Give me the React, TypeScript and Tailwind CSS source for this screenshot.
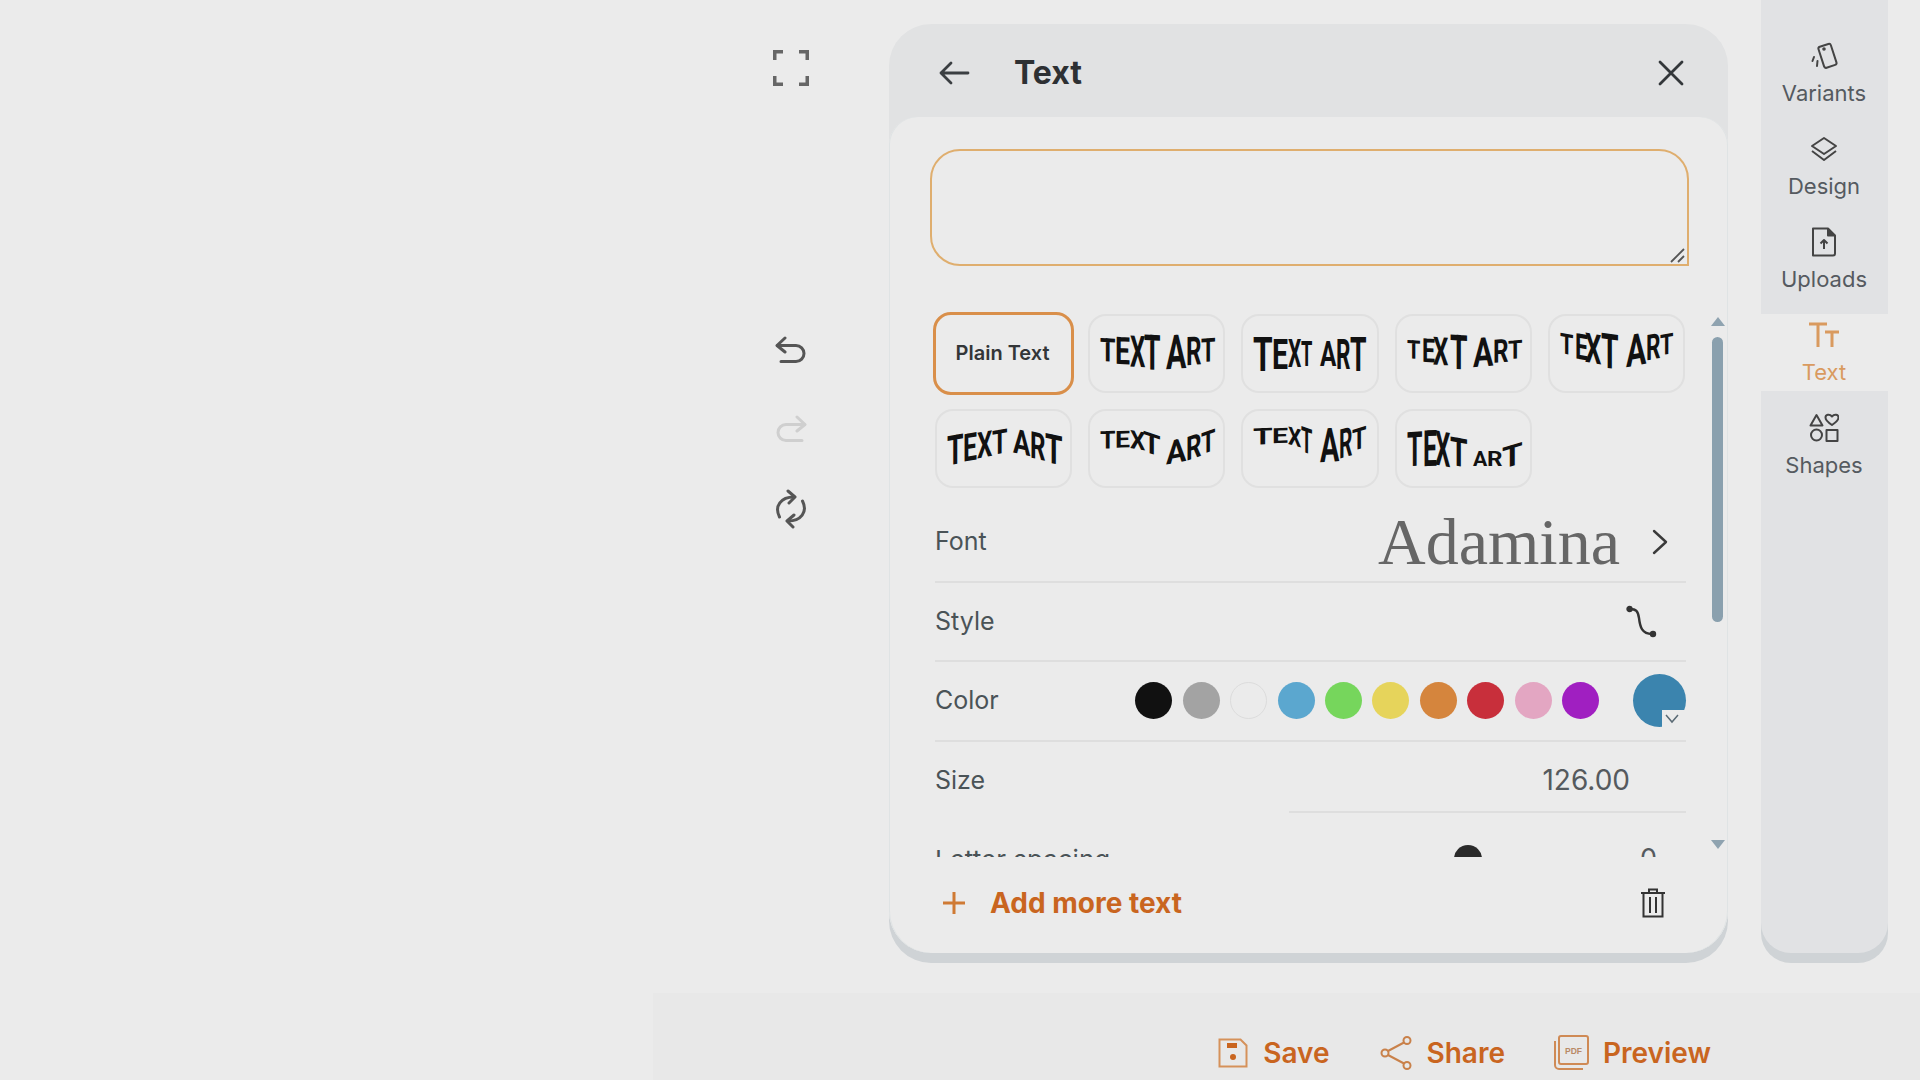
import React from "react";

type P = [number, number];
type Art = { top: P[]; bot: P[]; box: P[] };

const LETTERS = ["T", "E", "X", "T", "A", "R", "T"];
const GLYPH = [0.6, 0.56, 0.62, 0.6, 0.66, 0.62, 0.6];
const CAP = 71;

const at = (pts: P[], x: number) => {
  if (x <= pts[0][0]) return pts[0][1];
  for (let i = 1; i < pts.length; i++) {
    if (x <= pts[i][0]) {
      const [x0, y0] = pts[i - 1];
      const [x1, y1] = pts[i];
      return y0 + ((y1 - y0) * (x - x0)) / (x1 - x0);
    }
  }
  return pts[pts.length - 1][1];
};

const ARTS: Art[] = [
  { top: [[12, 25], [72, 20], [78, 20], [127, 25]], bot: [[12, 46], [72, 57], [78, 57], [127, 46]], box: [[12, 27], [27, 42], [42, 57], [56, 72], [78, 98], [98, 113], [113, 127]] },
  { top: [[12, 21], [71, 28], [79, 28], [125, 21]], bot: [[12, 58], [71, 51], [79, 51], [125, 58]], box: [[12, 31], [31, 47], [47, 60], [60, 71], [79, 95], [95, 109], [109, 125]] },
  { top: [[12, 27], [72, 20], [78, 23], [127, 27]], bot: [[12, 43], [72, 57], [78, 55], [127, 43]], box: [[12, 25], [27, 40], [38, 53], [55, 72], [78, 98], [98, 113], [113, 127]] },
  { top: [[12, 20], [125, 20]], bot: [[12, 38], [68, 57], [78, 55], [125, 38]], box: [[12, 25], [27, 40], [37, 53], [53, 70], [78, 98], [98, 112], [112, 125]] },
  { top: [[12, 27], [72, 20], [78, 20], [127, 27]], bot: [[12, 57], [72, 43], [78, 43], [127, 57]], box: [[12, 28], [28, 42], [42, 57], [57, 72], [78, 95], [95, 110], [110, 127]] },
  { top: [[12, 22], [55, 22], [72, 27], [80, 35], [98, 28], [127, 20]], bot: [[12, 40], [45, 38], [72, 48], [80, 57], [100, 52], [127, 40]], box: [[12, 27], [27, 42], [42, 57], [55, 72], [78, 98], [98, 113], [113, 127]] },
  { top: [[12, 19], [125, 19]], bot: [[12, 36], [50, 33], [71, 48], [85, 58], [105, 48], [125, 36]], box: [[12, 31], [31, 47], [47, 60], [60, 71], [79, 98], [98, 111], [111, 125]] },
  { top: [[12, 24], [40, 20], [72, 32], [78, 42], [107, 42], [127, 30]], bot: [[12, 57], [127, 57]], box: [[12, 27], [28, 42], [40, 55], [55, 72], [78, 92], [92, 107], [107, 127]] },
];

function TextArt({ art }: { art: Art }) {
  return (
    <svg width="137" height="79" viewBox="0 0 137 79" className="block">
      {LETTERS.map((ch, i) => {
        const [x0, x1] = art.box[i];
        const w = GLYPH[i] * 100;
        const tL = at(art.top, x0);
        const tR = at(art.top, x1);
        const bL = at(art.bot, x0);
        const bR = at(art.bot, x1);
        const a = (x1 - x0) / w;
        const b = ((tR + bR) / 2 - (tL + bL) / 2) / (x1 - x0) * a;
        const d = ((bL + bR) / 2 - (tL + tR) / 2) / CAP;
        const f = (bL + bR) / 2 - (b * w) / 2;
        return (
          <text
            key={i}
            transform={`matrix(${a} ${b} 0 ${d} ${x0} ${f})`}
            fontSize="100"
            fontWeight="700"
            fontFamily="Roboto, 'Liberation Sans', sans-serif"
            fill="#111"
          >
            {ch}
          </text>
        );
      })}
    </svg>
  );
}

function RailItem({ icon, label, active }: { icon: React.ReactNode; label: string; active?: boolean }) {
  return (
    <div
      className={
        active
          ? "flex h-[77px] flex-col items-center bg-[#ebebeb] text-[#d99a5f]"
          : "flex h-[77px] flex-col items-center text-[#555a60]"
      }
    >
      <div className="flex h-[42px] w-full items-center justify-center pr-[1px]">{icon}</div>
      <div className="mt-[2px] pr-[1px] text-[22px] leading-[28px]">{label}</div>
    </div>
  );
}

export default function App() {
  return (
    <div className="flex h-screen w-full flex-col overflow-hidden bg-[#ebebeb] font-['Inter',sans-serif]">
      <div className="flex h-[993px] shrink-0 items-start justify-end pr-[32px]">
        {/* tool column */}
        <div className="mr-[80px] flex w-[36px] flex-col items-center pt-[50px] text-[#5c5c5c]">
          <svg width="36" height="36" viewBox="0 0 36 36" fill="none" stroke="#666" strokeWidth="3.500">
            <path d="M1.750 10V1.750H10M26 1.750h8.250V10M1.750 26v8.250H10M26 34.250h8.250V26" />
          </svg>
          <svg className="mt-[250px]" width="32" height="27" viewBox="0 0 32 27" fill="none" stroke="#555" strokeWidth="3" strokeLinecap="round" strokeLinejoin="round">
            <path d="M10 2 2 9.500l8 6.500" />
            <path d="M2.500 9.500H21a8 8 0 0 1 0 16H6" />
          </svg>
          <svg className="mt-[52px]" width="32" height="28" viewBox="0 0 32 28" fill="none" stroke="#cfcfcf" strokeWidth="3" strokeLinecap="round" strokeLinejoin="round">
            <path d="M22 2l8 7.500-8 6.500" />
            <path d="M29.500 9.500H11a8 8 0 0 0 0 16h16" />
          </svg>
          <svg className="mt-[46px]" width="32" height="40" viewBox="0 0 32 40" fill="none" stroke="#555" strokeWidth="3" strokeLinecap="round" strokeLinejoin="round">
            <path d="M4.500 28C-1 17 6 8 19 8" />
            <path d="M13 2l7 6-6 6" />
            <path d="M27.500 12C33 23 26 32 13 32" />
            <path d="M19 26l-7 6 6 6" />
          </svg>
        </div>

        {/* panel */}
        <div className="mt-[24px] mr-[33px] flex h-[929px] w-[839px] flex-col rounded-[42px] bg-[#e1e2e3] shadow-[0_10px_0_#cfd3d6]">
          <div className="flex h-[93px] shrink-0 items-center pt-[5px] pr-[44px] pl-[50px]">
            <svg width="31" height="24" viewBox="0 0 31 24" fill="none" stroke="#3b3f42" strokeWidth="2.800" strokeLinecap="round" strokeLinejoin="round">
              <path d="M29 12H2M12 2 2 12l10 10" />
            </svg>
            <div className="ml-[44px] flex-1 text-[32px] font-bold leading-none text-[#2d3033]">Text</div>
            <svg width="26" height="26" viewBox="0 0 26 26" fill="none" stroke="#33373a" strokeWidth="2.800" strokeLinecap="round">
              <path d="M2 2l22 22M24 2 2 24" />
            </svg>
          </div>

          <div className="flex min-h-0 flex-1 flex-col rounded-t-[28px] rounded-b-[42px] bg-[#ebebeb] shadow-[inset_1px_0_0_#dfe3e4,inset_-1px_0_0_#dfe3e4]">
            <div className="px-[41px] pt-[32px]">
              <div className="relative h-[117px] w-[759px]">
                <textarea className="block h-full w-full resize-none rounded-[30px] rounded-br-none border-2 border-[#dfae6e] bg-transparent outline-none" />
                <svg className="absolute right-[3px] bottom-[3px]" width="16" height="15" viewBox="0 0 16 15" fill="none" stroke="#555" strokeWidth="1.800">
                  <path d="M1 14 14 1M8 14l6-6" />
                </svg>
              </div>
            </div>

            <div className="mt-[40px] flex h-[551px] overflow-hidden">
              <div className="ml-[46px] w-[751px] shrink-0 pt-[8px]">
                <div className="grid grid-cols-[137px_137px_138px_137px_137px] grid-rows-[79px_79px] gap-x-[16px] gap-y-[16px]">
                  <div className="-m-[2px] flex items-center justify-center rounded-[18px] border-[3px] border-[#d98f4a] pr-[2px] pb-[1px] text-[20px] font-semibold text-[#333638]">
                    Plain Text
                  </div>
                  {ARTS.map((art, i) => (
                    <div key={i} className="rounded-[18px] border-2 border-[#e0e0e0]">
                      <div className="-m-[2px]">
                        <TextArt art={art} />
                      </div>
                    </div>
                  ))}
                </div>

                <div className="mt-[17px] flex h-[78px] items-center border-b-2 border-[#dedede] pb-[2px] text-[25px] text-[#4a5357]">
                  <div className="flex-1">Font</div>
                  <div className="font-['Liberation_Serif',serif] text-[66px] leading-none text-[#666666]">Adamina</div>
                  <svg className="mr-[18px] ml-[32px]" width="16" height="26" viewBox="0 0 16 26" fill="none" stroke="#3a3a3a" strokeWidth="2.400" strokeLinecap="round" strokeLinejoin="round">
                    <path d="M2 2l12 11L2 24" />
                  </svg>
                </div>

                <div className="flex h-[79px] items-center border-b-2 border-[#dedede] text-[25px] text-[#4a5357]">
                  <div className="flex-1">Style</div>
                  <svg className="mr-[27px]" width="34" height="34" viewBox="0 0 34 34" fill="none" stroke="#333" strokeWidth="2.400" strokeLinecap="round">
                    <path d="M5 4c6 0 8 2 9 9 1 9 3 16 13 16" />
                    <circle cx="4.500" cy="4" r="2" fill="#333" />
                    <circle cx="28" cy="29" r="2" fill="#333" />
                  </svg>
                </div>

                <div className="flex h-[80px] items-center border-b-2 border-[#dedede] pb-[1px] text-[25px] text-[#4a5357]">
                  <div className="flex-1">Color</div>
                  <div className="flex items-center gap-[10.400px]">
                    <div className="h-[37px] w-[37px] rounded-full bg-[#111111]" />
                    <div className="h-[37px] w-[37px] rounded-full bg-[#a3a3a3]" />
                    <div className="h-[37px] w-[37px] rounded-full border border-[#dcdcdc]" />
                    <div className="h-[37px] w-[37px] rounded-full bg-[#5ba7cf]" />
                    <div className="h-[37px] w-[37px] rounded-full bg-[#76d65c]" />
                    <div className="h-[37px] w-[37px] rounded-full bg-[#e6d45b]" />
                    <div className="h-[37px] w-[37px] rounded-full bg-[#d5853d]" />
                    <div className="h-[37px] w-[37px] rounded-full bg-[#c82f3b]" />
                    <div className="h-[37px] w-[37px] rounded-full bg-[#e3a6c2]" />
                    <div className="h-[37px] w-[37px] rounded-full bg-[#a01fc1]" />
                  </div>
                  <div className="relative ml-[34px] h-[53px] w-[53px] rounded-full bg-[#3b84ae]">
                    <div className="absolute right-0 bottom-0 flex h-[17px] w-[24px] items-center justify-center bg-[#ebebeb] pr-[4px]">
                      <svg width="14" height="10" viewBox="0 0 14 10" fill="none" stroke="#5a6a74" strokeWidth="1.500">
                        <path d="M1 1l6 7 6-7" />
                      </svg>
                    </div>
                  </div>
                </div>

                <div className="flex h-[71px] items-stretch justify-between text-[25px] text-[#4a5357]">
                  <div className="flex items-center pt-[6px]">Size</div>
                  <div className="flex w-[397px] items-center justify-end border-b-2 border-[#dedede] pt-[6px] pr-[56px] text-[28px] text-[#555a5e]">126.00</div>
                </div>

                <div className="mt-[16px] flex h-[60px] items-center text-[26px] text-[#4a5357]">
                  <div className="flex-1">Letter spacing</div>
                  <div className="h-[28px] w-[28px] rounded-full bg-[#2a2a2a]" />
                  <div className="mt-[8px] ml-[86px] h-[4px] w-[2px] bg-[#888888]" />
                  <div className="mr-[30px] ml-[70px] w-[16px] text-center text-[27px] text-[#555a5e]">0</div>
                </div>
              </div>

              <div className="ml-[25px] flex w-[13px] shrink-0 flex-col items-center">
                <svg className="mt-[11px]" width="14" height="9" viewBox="0 0 14 9" fill="#8fa3b0">
                  <path d="M7 0l7 9H0z" />
                </svg>
                <div className="mt-[11px] h-[285px] w-[11px] rounded-full bg-[#8aa0ae]" />
                <svg className="mt-[218px]" width="14" height="9" viewBox="0 0 14 9" fill="#8fa3b0">
                  <path d="M7 9l7-9H0z" />
                </svg>
              </div>
            </div>

            <div className="flex h-[92px] items-center pr-[62px] pl-[54px]">
              <svg width="22" height="22" viewBox="0 0 22 22" fill="none" stroke="#cf7a34" strokeWidth="3">
                <path d="M11 0v22M0 11h22" />
              </svg>
              <div className="ml-[25px] flex-1 text-[28px] font-bold text-[#c9651f]">Add more text</div>
              <svg width="26" height="30" viewBox="0 0 26 30" fill="none" stroke="#333" strokeWidth="2">
                <path d="M1 5h24M9 5V1.500h8V5M3.500 5v23.500h19V5M10 9v16M16 9v16" />
              </svg>
            </div>
          </div>
        </div>

        {/* rail */}
        <div className="flex h-[953px] w-[127px] shrink-0 flex-col gap-[16px] rounded-b-[30px] bg-[#e1e2e4] pt-[35px] shadow-[0_10px_0_#cfd3d6]">
          <RailItem
            label="Variants"
            icon={
              <svg className="mt-[2px]" width="30" height="30" viewBox="0 0 30 30" fill="none" stroke="#444" strokeWidth="2">
                <rect x="12" y="3" width="13" height="22" rx="2" transform="rotate(-18 18 14)" />
                <circle cx="15" cy="7" r="0.800" fill="#444" />
                <path d="M5 15l-1.500 4M8.500 19l-.5 5" strokeLinecap="round" />
              </svg>
            }
          />
          <RailItem
            label="Design"
            icon={
              <svg width="28" height="28" viewBox="0 0 28 28" fill="none" stroke="#444" strokeWidth="2" strokeLinejoin="round">
                <path d="M14 3l12 8-12 8-12-8z" />
                <path d="M2 16l12 9 12-9" />
              </svg>
            }
          />
          <RailItem
            label="Uploads"
            icon={
              <svg width="26" height="30" viewBox="0 0 26 30" fill="none" stroke="#444" strokeWidth="2" strokeLinejoin="round">
                <path d="M2 1.500h15l7 7v18a2 2 0 0 1-2 2H2z" />
                <path d="M17 1.500v7h7" fill="#444" />
                <path d="M13 22v-9M9.500 16.500 13 13l3.500 3.500" />
              </svg>
            }
          />
          <RailItem
            label="Text"
            active
            icon={
              <svg width="30" height="26" viewBox="0 0 30 26" fill="none" stroke="#d99a5f" strokeWidth="3">
                <path d="M0 2h18M9 2v23M16 10h14M23 10v15" />
              </svg>
            }
          />
          <RailItem
            label="Shapes"
            icon={
              <svg width="30" height="30" viewBox="0 0 30 30" fill="none" stroke="#444" strokeWidth="2" strokeLinejoin="round">
                <path d="M7.500 2l6 10.500H1.500z" />
                <path d="M23 12c-3-2-6.500-4.500-6.500-7.500 0-3 4-4 6.500-1 2.500-3 6.500-2 6.500 1 0 3-3.500 5.500-6.500 7.500z" />
                <circle cx="7.500" cy="22" r="5.500" />
                <rect x="17.500" y="17" width="11" height="11" />
              </svg>
            }
          />
        </div>
      </div>

      {/* bottom bar */}
      <div className="ml-[653px] flex h-[87px] shrink-0 items-center justify-end bg-[#e8e8e8] pt-[32px] pr-[209px] text-[28px] font-semibold text-[#c9651f]">
        <svg width="30" height="30" viewBox="0 0 30 30" fill="none" stroke="#d5915a" strokeWidth="2">
          <path d="M1.500 1.500h21l6 6v21h-27z" />
          <rect x="9" y="5" width="10" height="5" fill="#c9651f" stroke="none" />
          <circle cx="15" cy="19" r="3" fill="#c9651f" stroke="none" />
        </svg>
        <div className="ml-[15px]">Save</div>
        <svg className="ml-[50px]" width="32" height="34" viewBox="0 0 32 34" fill="none" stroke="#c9814a" strokeWidth="2">
          <circle cx="5" cy="17" r="3.500" />
          <circle cx="27" cy="4.500" r="3.500" />
          <circle cx="27" cy="29.500" r="3.500" />
          <path d="M8 15 24 6.500M8 19l16 8.500" />
        </svg>
        <div className="ml-[15px]">Share</div>
        <svg className="ml-[49px]" width="35" height="35" viewBox="0 0 35 35" fill="none" stroke="#cf8a55" strokeWidth="2">
          <rect x="5" y="1" width="29" height="28" rx="2" />
          <path d="M1 6v24a4 4 0 0 0 4 4h24" />
          <text x="11" y="19" fontSize="8.500" fill="#b98a66" stroke="none" fontFamily="'Liberation Sans', sans-serif" fontWeight="700">
            PDF
          </text>
        </svg>
        <div className="ml-[14px]">Preview</div>
      </div>
    </div>
  );
}
